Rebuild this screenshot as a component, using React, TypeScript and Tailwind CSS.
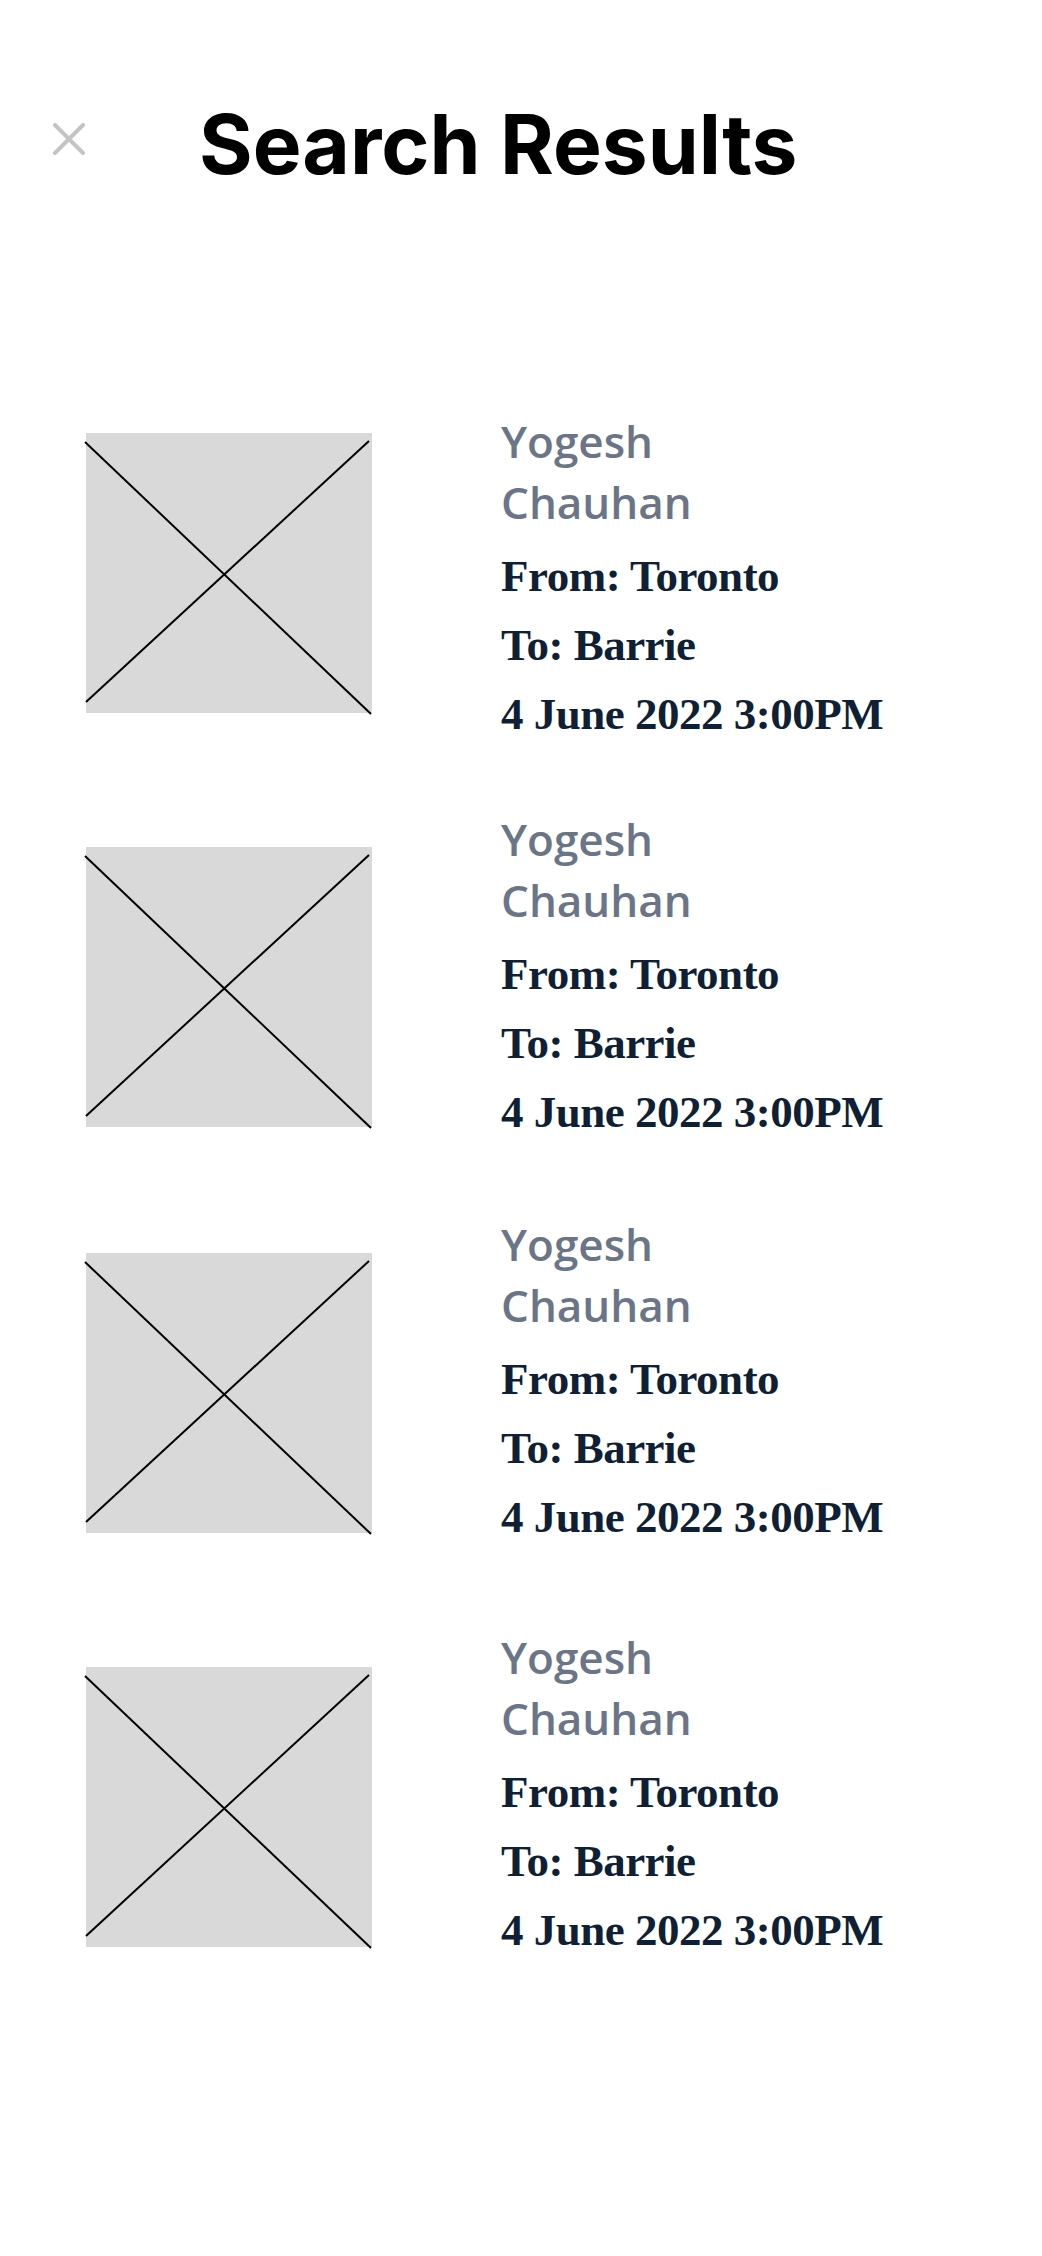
import React from 'react';

type Result = {
    id: number;
    name: string;
    from: string;
    to: string;
    when: string;
    rowClass: string;
    imageClass: string;
};

const results: Result[] = [
    { id: 1, name: 'Yogesh Chauhan', from: 'Toronto', to: 'Barrie', when: '4 June 2022 3:00PM', rowClass: 'mt-[225px]', imageClass: 'mt-[22px]' },
    { id: 2, name: 'Yogesh Chauhan', from: 'Toronto', to: 'Barrie', when: '4 June 2022 3:00PM', rowClass: 'mt-[60px]', imageClass: 'mt-[38px]' },
    { id: 3, name: 'Yogesh Chauhan', from: 'Toronto', to: 'Barrie', when: '4 June 2022 3:00PM', rowClass: 'mt-[67px]', imageClass: 'mt-[39px]' },
    { id: 4, name: 'Yogesh Chauhan', from: 'Toronto', to: 'Barrie', when: '4 June 2022 3:00PM', rowClass: 'mt-[75px]', imageClass: 'mt-[40px]' },
];

const CloseIcon: React.FC = () => (
    <svg width="32" height="32" viewBox="0 0 32 32" fill="none" className="shrink-0 self-start mt-[19px]">
        <path d="M2 2L30 30M30 2L2 30" stroke="#c4c4c4" strokeWidth="4" strokeLinecap="round" />
    </svg>
);

// grey placeholder with the crossed lines
const Placeholder: React.FC<{ className?: string }> = ({ className }) => (
    <div className={`w-[286px] h-[280px] shrink-0 bg-[#d9d9d9] ${className ?? ''}`}>
        <svg width="286" height="280" viewBox="0 0 286 280" className="overflow-visible">
            <line x1="-1" y1="9" x2="285" y2="281" stroke="#000" strokeWidth="2" />
            <line x1="283" y1="8" x2="0" y2="269" stroke="#000" strokeWidth="2" />
        </svg>
    </div>
);

const ResultRow: React.FC<{ result: Result }> = ({ result }) => (
    <div className={`flex items-start ${result.rowClass}`}>
        <Placeholder className={result.imageClass} />
        <div className="ml-[129px] flex flex-col">
            <p className="w-[260px] font-['Open_Sans',sans-serif] text-[44px] font-semibold leading-[61px] text-[#6b7588]">
                {result.name}
            </p>
            <div className="mt-[9px] font-['Liberation_Serif',serif] text-[45px] font-bold leading-[69px] tracking-[-0.5px] text-[#0f1f35] whitespace-nowrap">
                <p>From: {result.from}</p>
                <p>To: {result.to}</p>
                <p>{result.when}</p>
            </div>
        </div>
    </div>
);

const App: React.FC = () => {
    return (
        <div className="min-h-screen bg-white">
            {/* Header */}
            <div className="flex items-center pl-[53px] pt-[104px]">
                <CloseIcon />
                <h1 className="ml-[114px] font-['Inter',sans-serif] text-[82px] font-bold leading-none text-black">
                    Search Results
                </h1>
            </div>

            {/* Results */}
            <div className="flex flex-col pl-[86px] pb-[200px]">
                {results.map(r => (
                    <ResultRow key={r.id} result={r} />
                ))}
            </div>
        </div>
    );
};

export default App;
